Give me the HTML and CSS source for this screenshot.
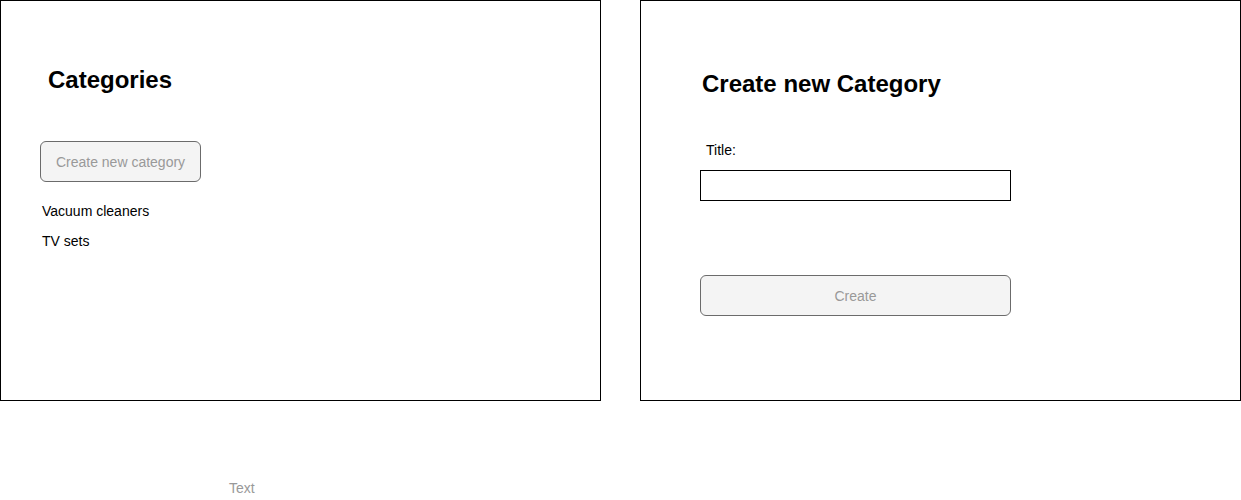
FILE: index.html
```html
<!DOCTYPE html>
<html>
<head>
<meta charset="utf-8">
<link rel="stylesheet" href="styles.css">
</head>
<body>
<div class="panels">
  <div class="panel panel-list">
    <h1 class="title title-list">Categories</h1>
    <button class="btn btn-new">Create new category</button>
    <ul class="items">
      <li>Vacuum cleaners</li>
      <li>TV sets</li>
    </ul>
  </div>
  <div class="panel panel-form">
    <h1 class="title title-form">Create new Category</h1>
    <label class="label">Title:</label>
    <input class="field" type="text">
    <button class="btn btn-create">Create</button>
  </div>
</div>
<div class="caption">Text</div>
</body>
</html>
```
FILE: styles.css
```css
html, body {
  margin: 0;
  padding: 0;
  background: #fff;
}
body {
  font-family: "Liberation Sans", Arial, sans-serif;
  color: #000;
  font-size: 14px;
  line-height: 20px;
}
.panels {
  display: flex;
  gap: 39px;
}
.panel {
  box-sizing: border-box;
  width: 601px;
  height: 401px;
  border: 1px solid #000;
  display: flex;
  flex-direction: column;
  align-items: flex-start;
}
.panel-list {
  padding-left: 39px;
}
.panel-form {
  padding-left: 59px;
}
.title {
  font-size: 24px;
  line-height: 28px;
  font-weight: bold;
  margin: 0;
}
.title-list {
  margin: 65px 0 0 8px;
}
.title-form {
  margin: 69px 0 0 2px;
}
.btn {
  box-sizing: border-box;
  height: 41px;
  border: 1px solid #6b6b6b;
  border-radius: 6px;
  background: #f4f4f4;
  color: #999;
  font-family: "Liberation Sans", Arial, sans-serif;
  font-size: 14px;
  padding: 0;
  text-align: center;
}
.btn-new {
  width: 161px;
  margin-top: 47px;
}
.items {
  list-style: none;
  margin: 19px 0 0 2px;
  padding: 0;
  display: flex;
  flex-direction: column;
  gap: 10px;
}
.label {
  margin: 42px 0 0 6px;
}
.field {
  box-sizing: border-box;
  width: 311px;
  height: 31px;
  border: 1px solid #000;
  border-radius: 0;
  margin: 10px 0 0 0;
  padding: 0 4px;
  background: #fff;
}
.btn-create {
  width: 311px;
  margin-top: 74px;
}
.caption {
  margin-top: 77px;
  padding-left: 229px;
  color: #999;
}
```
